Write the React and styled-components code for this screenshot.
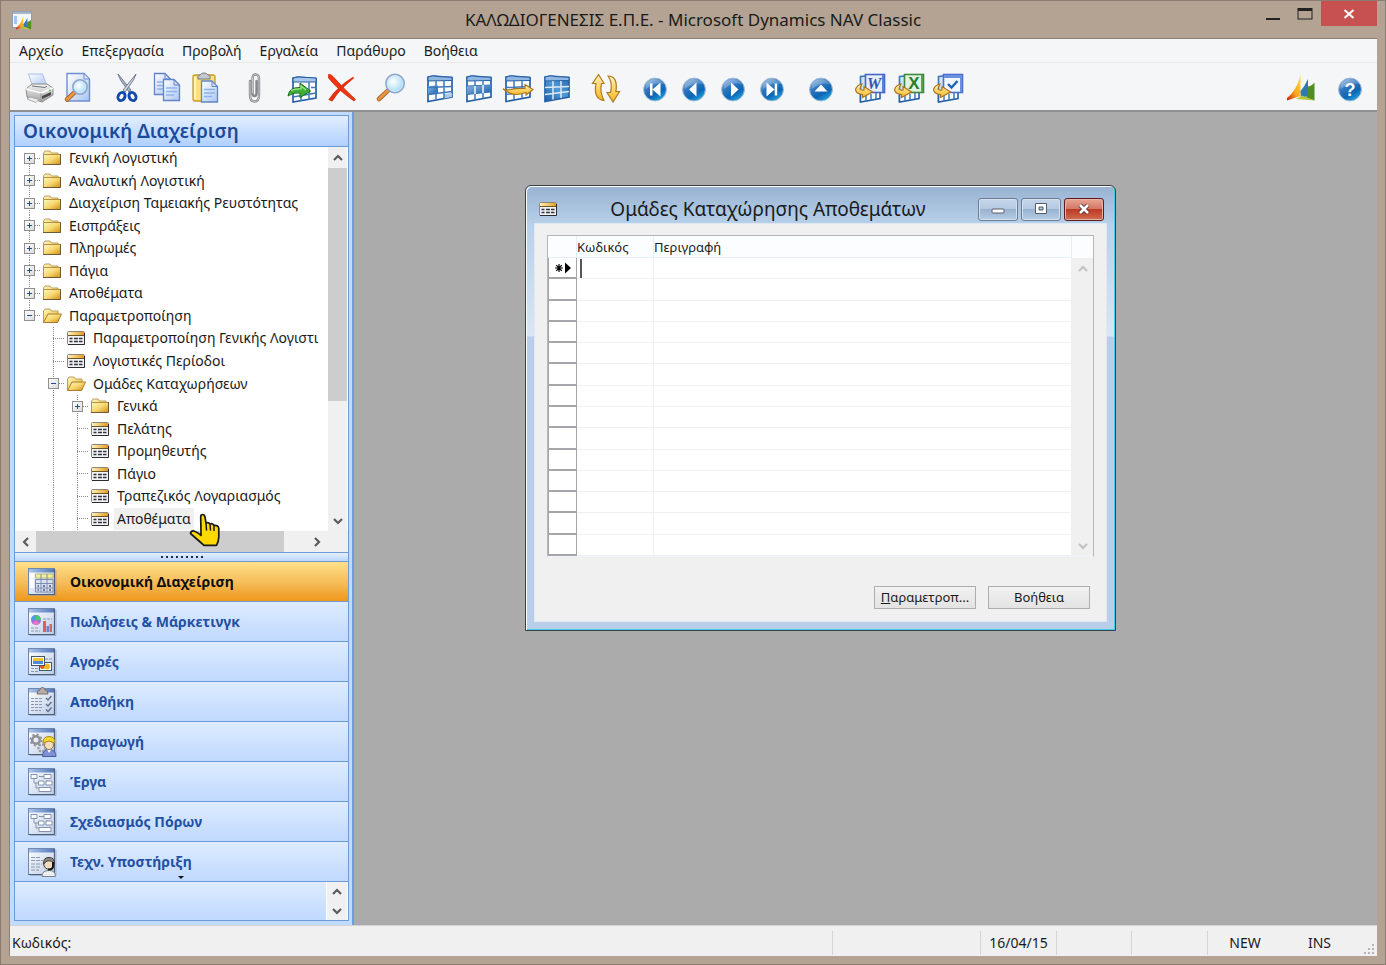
import React, { useState } from 'react';
import styled, { createGlobalStyle, css } from 'styled-components';

const GlobalStyle = createGlobalStyle`
  * {
    box-sizing: border-box;
  }
  body {
    margin: 0;
    font-family: 'Noto Sans', 'Open Sans', sans-serif;
    font-size: 14px;
    color: #1a1a1a;
  }
  button, input {
    font: inherit;
    color: inherit;
    border: 0;
    padding: 0;
    margin: 0;
    background: none;
  }
`;

// Main window
const Window = styled.div`
  display: flex;
  flex-direction: column;
  height: 100vh;
  min-height: 760px;
  padding: 0 8px 8px;
  border: 1px solid #8a7c70;
  background: #b4a392;
`;

const TitleBar = styled.header`
  display: grid;
  grid-template-columns: 120px 1fr 120px;
  align-items: center;
  height: 37px;
  flex: none;
`;

const WindowTitle = styled.h1`
  margin: 0;
  font-size: 17px;
  line-height: 24px;
  font-weight: 400;
  text-align: center;
  white-space: nowrap;
`;

const WindowButtons = styled.div`
  display: flex;
  justify-content: flex-end;
  align-self: start;
`;

const WindowButton = styled.button`
  display: grid;
  place-items: center;
  width: ${(props) => (props.$close ? '56px' : '32px')};
  height: 25px;
  background: ${(props) => (props.$close ? '#c75050' : 'none')};
`;

const Client = styled.div`
  display: flex;
  flex-direction: column;
  flex: 1;
  min-height: 0;
  border: solid #8e8074;
  border-width: 1px 0 0 1px;
`;

const MenuBar = styled.nav`
  display: flex;
  gap: 18px;
  height: 24px;
  padding: 0 9px;
  border-bottom: 1px solid #e6e8ea;
  background: #f5f6f8;
`;

const MenuItem = styled.button`
  line-height: 24px;
`;

const ToolBar = styled.div`
  display: flex;
  gap: 10px;
  height: 49px;
  padding: 2px 8px 0 9px;
  border-bottom: 2px solid #8f908f;
  background: #f5f6f8;
`;

const ToolGroup = styled.div`
  display: flex;
  margin-left: ${(props) => (props.$end ? 'auto' : '0')};
`;

const ToolButton = styled.button`
  display: grid;
  place-items: center;
  width: 39px;
`;

const Body = styled.div`
  display: flex;
  flex: 1;
  min-height: 0;
`;

// Navigation pane
const Sidebar = styled.aside`
  display: flex;
  flex: none;
  width: 344px;
  padding: 3px 3px 4px 4px;
  border-right: 2px solid #6c9de0;
  background: #bfdbff;
`;

const Pane = styled.div`
  display: flex;
  flex-direction: column;
  flex: 1;
  min-width: 0;
  border: 1px solid #6f9ad6;
`;

const PaneTitle = styled.h2`
  height: 31px;
  margin: 0;
  padding-left: 8px;
  border-bottom: 1px solid #6f9ad6;
  background: linear-gradient(#e2eeff, #b0d0ff);
  color: #1c4a9a;
  font-size: 19px;
  line-height: 30px;
  font-weight: 600;
`;

const TreePanel = styled.div`
  position: relative;
  display: grid;
  grid-template-columns: 1fr 20px;
  grid-template-rows: 1fr 21px;
  flex: 1;
  min-height: 0;
  background: #fff;
`;

const TreeList = styled.ul`
  display: grid;
  grid-auto-rows: 1fr;
  margin: 0;
  padding: 0 0 1px 2px;
  list-style: none;
  overflow: hidden;
`;

const TreeRow = styled.li`
  display: flex;
  align-items: stretch;
  min-width: 0;
  white-space: nowrap;
`;

const dots = (side) => `repeating-linear-gradient(to ${side}, #8c8c8c 0 1px, transparent 1px 2px)`;

const Guide = styled.span`
  flex: none;
  width: 24px;
  ${(props) => props.$line && css`
    background: ${dots('bottom')} center / 1px 100% no-repeat;
  `}
`;

const lineBox = {
  full: 'center / 1px 100%',
  down: 'center bottom / 1px 50%',
  up: 'center top / 1px 50%',
};

const Joint = styled.span`
  display: grid;
  place-items: center;
  flex: none;
  width: 24px;
  background:
    ${dots('right')} right center / 50% 1px no-repeat,
    ${dots('bottom')} ${(props) => lineBox[props.$line]} no-repeat;
`;

const Toggle = styled.button`
  display: grid;
  place-items: center;
  width: 11px;
  height: 11px;
  border: 1px solid #8f8f8f;
  background: linear-gradient(135deg, #fff, #dcdcdc);
`;

const TreeIcon = styled.span`
  display: grid;
  place-items: center;
  flex: none;
  width: 22px;
`;

const TreeLabel = styled.span`
  align-self: center;
  margin-left: 3px;
  padding: 0 3px;
  background: ${(props) => (props.$selected ? '#f0f0f0' : 'none')};
  line-height: 22px;
`;

const ScrollButton = styled.button`
  display: grid;
  place-items: center;
  flex: none;
  width: 21px;
  height: 21px;
  color: ${(props) => (props.$faint ? '#c2c2c2' : '#5c5c5c')};
`;

const VScroll = styled.div`
  display: flex;
  flex-direction: column;
  margin-right: 1px;
  background: #f0f0f0;

  ${ScrollButton} {
    width: 100%;
  }
`;

const HScroll = styled.div`
  display: flex;
  grid-column: 1 / -1;
  background: #f0f0f0;
`;

const ScrollCorner = styled.div`
  width: 21px;
`;

const ThumbTrack = styled.div`
  display: flex;
  flex-direction: inherit;
  flex: 1;
`;

const Thumb = styled.div`
  flex: 0 0 ${(props) => props.$size};
  background: #cdcdcd;
`;

const Hand = styled.svg`
  position: absolute;
  left: 174px;
  bottom: 5px;
`;

const Splitter = styled.div`
  display: flex;
  justify-content: center;
  align-items: center;
  gap: 3px;
  height: 10px;
  flex: none;
  border: solid #6f9ad6;
  border-width: 1px 0;
  background: linear-gradient(#e4f0ff, #bcd7fd);
`;

const Dot = styled.i`
  width: 2px;
  height: 2px;
  background: #1f2b48;
`;

const ModuleButton = styled.button`
  position: relative;
  display: flex;
  align-items: center;
  gap: 13px;
  width: 100%;
  height: 40px;
  flex: none;
  padding-left: 12px;
  border-bottom: 1px solid #6f9ad6;
  background: ${(props) => (props.$active
    ? 'linear-gradient(#ffe08a, #f6bb56 55%, #ee971b)'
    : 'linear-gradient(#deebff, #bfd9ff)')};
  color: ${(props) => (props.$active ? '#0f0f0f' : '#2350a2')};
  font-weight: 700;
  text-align: left;
`;

const MoreMark = styled.svg`
  position: absolute;
  left: 162px;
  bottom: 1px;
`;

const PaneFooter = styled.div`
  display: flex;
  justify-content: flex-end;
  height: 38px;
  flex: none;
  background: linear-gradient(#deebff, #bfd9ff);
`;

const FooterScroll = styled.div`
  display: flex;
  flex-direction: column;
  width: 22px;
  border: solid #fff;
  border-width: 0 1px 0 1px;
  background: #f0f0f0;

  ${ScrollButton} {
    width: 100%;
    height: 19px;
  }
`;

// Work area and its form
const Desktop = styled.main`
  position: relative;
  flex: 1;
  background: #ababab;
`;

const Form = styled.section`
  position: absolute;
  left: 171px;
  top: 73px;
  display: flex;
  flex-direction: column;
  width: 591px;
  padding: 1px;
  border: 1px solid #3b3f45;
  border-radius: 6px 6px 0 0;
  background: linear-gradient(#98b3d2, #b9d1ea 40px, #d9e6f4 150px, #b9cfe9 151px);
  box-shadow: inset 1px 1px 0 #fff, inset -1px -1px 0 #3fd0ea;
`;

const FormTitleBar = styled.div`
  display: flex;
  align-items: center;
  height: 36px;
  padding: 8px 10px 0 11px;
`;

const FormTitle = styled.h3`
  flex: 1;
  margin: 0;
  font-size: 19px;
  line-height: 28px;
  font-weight: 400;
  text-align: center;
  white-space: nowrap;
`;

const FormButtons = styled.div`
  display: flex;
  gap: 3px;
`;

const FormButton = styled.button`
  display: grid;
  place-items: center;
  width: 40px;
  height: 23px;
  border: 1px solid ${(props) => (props.$close ? '#5a1a1e' : '#6b7b93')};
  border-radius: 3px;
  background: ${(props) => (props.$close
    ? 'linear-gradient(#e8a593, #d27664 48%, #bb3a22 50%, #cf6c50)'
    : 'linear-gradient(#c5d6ea, #b3c8e0 48%, #98b2d0 50%, #b6cde6)')};
  box-shadow: inset 0 0 0 1px ${(props) => (props.$close ? '#eab3a5' : '#d3e1f1')};
`;

const FormBody = styled.div`
  margin: 0 7px 7px;
  padding: 11px 12px 12px;
  border: 1px solid #dfe8f3;
  background: #f0f0f0;
`;

const Sheet = styled.div`
  display: flex;
  border: 1px solid #b5b6bb;
  border-bottom-color: #eef4fa;
  background: #fff;
`;

const Grid = styled.table`
  flex: 1;
  height: 320px;
  border-collapse: separate;
  border-spacing: 0;
  table-layout: fixed;
`;

const HeadCell = styled.th`
  width: ${(props) => props.$width || 'auto'};
  height: 22px;
  padding: 0;
  border: solid #e4eefa;
  border-width: 0 1px 1px 0;
  background: #fcfdfe;
  font-size: 13px;
  line-height: 20px;
  font-weight: 400;
  text-align: left;
`;

const Cell = styled.td`
  height: 21px;
  padding: 0;
  border: solid #efefef;
  border-width: 0 1px 1px 0;
`;

const MarkCell = styled.td`
  height: 21px;
  padding: 0;
  border: solid #a5a5ab;
  border-width: 0 1px 2px 1px;
`;

const RowMark = styled.svg`
  display: block;
  margin: 0 auto;
`;

const Editor = styled.span`
  display: flex;
  height: 19px;
  margin-left: 3px;
  border-left: 2px solid #555;
`;

const CellInput = styled.input`
  width: 66px;
  height: 19px;
  outline: none;
`;

const SheetScroll = styled.div`
  display: flex;
  flex-direction: column;
  justify-content: space-between;
  width: 21px;
  padding-top: 22px;
  background: linear-gradient(#fcfdfe 22px, #f0f0f0 22px);
`;

const FormActions = styled.div`
  display: flex;
  justify-content: flex-end;
  gap: 12px;
  margin-top: 29px;
  padding-right: 4px;
`;

const FormAction = styled.button`
  width: 102px;
  height: 23px;
  border: 1px solid #adadad;
  background: linear-gradient(#f1f1f1, #e3e3e3);
  font-size: 13px;
  line-height: 21px;
`;

const StatusBar = styled.footer`
  display: flex;
  align-items: stretch;
  height: 31px;
  flex: none;
  padding: 5px 0 1px 2px;
  border-top: 1px solid #d4d4d4;
  background: #f0f0f0;
  line-height: 24px;
`;

const StatusCell = styled.div`
  flex: ${(props) => (props.$width ? `0 0 ${props.$width}` : '1')};
  border-left: ${(props) => (props.$rule ? '1px solid #d5d5d5' : '0')};
  text-align: ${(props) => (props.$width ? 'center' : 'left')};
`;

const Grip = styled.svg`
  flex: none;
  align-self: flex-end;
`;

const DefsHolder = styled.svg`
  position: absolute;
`;

// Shared gradients for all drawings
const Defs = () => (
  <DefsHolder width="0" height="0" aria-hidden="true">
    <defs>
      <linearGradient id="ball" x1="0" y1="0" x2="0.6" y2="1">
        <stop offset="0" stopColor="#a9c7e8" />
        <stop offset="0.45" stopColor="#2f76bd" />
        <stop offset="0.75" stopColor="#0d65b4" />
        <stop offset="1" stopColor="#1d9ad8" />
      </linearGradient>
      <linearGradient id="gold" x1="0" y1="0" x2="1" y2="1">
        <stop offset="0" stopColor="#fff6c4" />
        <stop offset="0.5" stopColor="#f8d870" />
        <stop offset="1" stopColor="#d08e14" />
      </linearGradient>
      <linearGradient id="arrow" x1="0" y1="0" x2="0" y2="1">
        <stop offset="0" stopColor="#fff2c0" />
        <stop offset="1" stopColor="#f5b81d" />
      </linearGradient>
      <linearGradient id="sheet" x1="0" y1="0" x2="1" y2="1">
        <stop offset="0" stopColor="#ffffff" />
        <stop offset="1" stopColor="#a9c4f2" />
      </linearGradient>
      <linearGradient id="steel" x1="0" y1="0" x2="0" y2="1">
        <stop offset="0" stopColor="#f4f4f4" />
        <stop offset="1" stopColor="#a2a2a2" />
      </linearGradient>
      <linearGradient id="cells" x1="0" y1="0" x2="1" y2="1">
        <stop offset="0" stopColor="#8db9e6" />
        <stop offset="1" stopColor="#145ca8" />
      </linearGradient>
      <linearGradient id="deep" x1="0" y1="1" x2="1" y2="0">
        <stop offset="0" stopColor="#1a5ea8" />
        <stop offset="0.5" stopColor="#4f9ad8" />
        <stop offset="1" stopColor="#2468b0" />
      </linearGradient>
      <linearGradient id="cardTop" x1="0" y1="0" x2="1" y2="0">
        <stop offset="0" stopColor="#fff0bc" />
        <stop offset="1" stopColor="#e39d1c" />
      </linearGradient>
      <linearGradient id="bar" x1="0" y1="0" x2="1" y2="0">
        <stop offset="0" stopColor="#a9c3ea" />
        <stop offset="1" stopColor="#5579b8" />
      </linearGradient>
      <linearGradient id="page" x1="0" y1="0" x2="1" y2="1">
        <stop offset="0" stopColor="#ffffff" />
        <stop offset="1" stopColor="#bccbe6" />
      </linearGradient>
      <linearGradient id="sail" x1="1" y1="0" x2="0" y2="1">
        <stop offset="0" stopColor="#ffe23c" />
        <stop offset="0.55" stopColor="#f9a51a" />
        <stop offset="1" stopColor="#c81e10" />
      </linearGradient>
      <radialGradient id="lens" cx="0.4" cy="0.4" r="0.6">
        <stop offset="0" stopColor="#ffffff" />
        <stop offset="1" stopColor="#a6dcf6" />
      </radialGradient>
    </defs>
  </DefsHolder>
);

const Icon = ({ children }) => (
  <svg width="32" height="32" viewBox="0 0 32 32" fill="none" aria-hidden="true">{children}</svg>
);

const Lens = ({ x, y, r, hx, hy }) => (
  <>
    <path d={`M${x - r * 0.7} ${y + r * 0.7}L${hx} ${hy}`} stroke="#a8622a" strokeWidth="4.6" strokeLinecap="round" />
    <path d={`M${x - r * 0.7} ${y + r * 0.7}L${hx} ${hy}`} stroke="#e9983f" strokeWidth="2.8" strokeLinecap="round" />
    <circle cx={x} cy={y} r={r} fill="url(#lens)" stroke="#8fa6cc" strokeWidth="2" />
    <circle cx={x} cy={y} r={r - 1} stroke="#dfeefb" strokeWidth="0.8" />
  </>
);

const TableBase = ({ children, fill = '#fff' }) => (
  <>
    <path d="M4 5L9 4.2L28 5.5V25L4 29.5Z" fill={fill} stroke="#2560a6" strokeWidth="1.7" />
    <path d="M4 5L9 3.8L15 4.6L28 5.3V8.500L4 9Z" fill="#8fb7e2" stroke="#2560a6" />
    {children}
  </>
);

const TableLines = ({ color = '#3d79bb' }) => (
  <path d="M4 15.5L28 14.5M4 22.5L28 19.500M12 9V27.5M20 9V26" stroke={color} strokeWidth="1.500" />
);

const Ball = ({ children }) => (
  <Icon>
    <circle cx="16" cy="17.5" r="11.4" fill="url(#ball)" stroke="#9fb8d4" strokeWidth="1" />
    <path d="M7 12A11 11 0 0 1 25 12Q16 10 7 17Z" fill="#fff" opacity="0.22" />
    {children}
  </Icon>
);

const ExportIcon = ({ color, frame, children }) => (
  <Icon>
    <path d="M6.500 4.5L12 4V28L6.500 29Z" fill="#cfe2f6" stroke="#3a78bb" strokeWidth="1.6" />
    <path d="M6.500 20L26 17V26.500L6.500 30Z" fill="#fff" stroke="#2560a6" strokeWidth="1.6" />
    <path d="M12 22V29M17 22V28M22 20V27" stroke="#3d79bb" strokeWidth="1.5" />
    <rect x="11.5" y="2.5" width="19" height="18" fill={color} stroke={frame} strokeWidth="1.6" />
    {children}
    <path d="M8 12Q3 13 1.5 17.500Q2 22 8.5 22.5V25.5L18.5 20L10 14.5V18Q7 18.5 6 17Q6.500 14.5 8 12Z" fill="url(#arrow)" stroke="#a8731d" strokeWidth="1.2" />
  </Icon>
);

const PrintIcon = () => (
  <Icon>
    <path d="M5.5 2H19.5L24 14H9.5Z" fill="url(#sheet)" stroke="#a9bfe6" />
    <path d="M3 17L9 12H24L30 16V23L19 30L4 25Z" fill="url(#steel)" stroke="#8b8b8b" />
    <path d="M3 17L18 21L30 16" stroke="#fff" strokeWidth="1.4" />
    <path d="M9 14L22 15.5L24 14" stroke="#777" />
    <path d="M18 21V29" stroke="#9a9a9a" />
    <path d="M19 24L28 20V23L19 27Z" fill="#4a4a4a" />
    <path d="M7 25L16 27.5L13 30.5L4 27Z" fill="#efefef" stroke="#9a9a9a" strokeWidth="0.8" />
    <circle cx="27" cy="18.5" r="0.9" fill="#4cc24c" />
  </Icon>
);

const PreviewIcon = () => (
  <Icon>
    <path d="M5 1.5H22L27.5 7V29H5Z" fill="url(#sheet)" stroke="#6f8fd0" strokeWidth="1.4" />
    <path d="M22 1.5V7H27.5Z" fill="#dfeaff" stroke="#6f8fd0" />
    <Lens x={18} y={15} r={7} hx={5} hy={27.5} />
  </Icon>
);

const CutIcon = () => (
  <Icon>
    <path d="M7 2L9.5 8L18 20L20 18Z" fill="#a7b2c2" stroke="#66758c" strokeWidth="0.9" />
    <path d="M25 2L22.5 8L14 20L12 18Z" fill="#ced6e0" stroke="#66758c" strokeWidth="0.9" />
    <ellipse cx="10.5" cy="24.5" rx="3.3" ry="4.2" transform="rotate(30 10.5 24.5)" stroke="#1148b0" strokeWidth="2.9" />
    <ellipse cx="21.5" cy="24.5" rx="3.3" ry="4.2" transform="rotate(-30 21.5 24.5)" stroke="#1148b0" strokeWidth="2.9" />
  </Icon>
);

const SmallPage = ({ x, y }) => (
  <g transform={`translate(${x} ${y})`}>
    <path d="M0.5 0.5H11L16.5 6V21.5H0.5Z" fill="url(#sheet)" stroke="#6484c8" strokeWidth="1.3" />
    <path d="M11 0.5V6H16.5" stroke="#6484c8" />
    <path d="M3 9H14M3 12.5H14M3 16H11" stroke="#8db4ea" strokeWidth="1.4" />
  </g>
);

const CopyIcon = () => (
  <Icon>
    <SmallPage x={4} y={1} />
    <SmallPage x={13} y={7} />
  </Icon>
);

const PasteIcon = () => (
  <Icon>
    <rect x="4" y="3" width="22" height="26" rx="2" fill="#fbe07c" stroke="#c99a27" strokeWidth="1.3" />
    <path d="M6 5V27" stroke="#fff4be" strokeWidth="2" />
    <path d="M9 7V4Q9 3 11 3Q12 1 15 1Q18 1 19 3Q21 3 21 4V7Z" fill="#c5c9cf" stroke="#74787e" />
    <SmallPage x={12} y={8.5} />
  </Icon>
);

const ClipIcon = () => (
  <Icon>
    <path d="M12 9V23Q12 29.5 16.5 29.5Q21 29.5 21 23V7Q21 2.5 17.7 2.5Q14.5 2.5 14.5 7V21Q14.5 24 16.5 24Q18.5 24 18.5 21V9" stroke="#85898e" strokeWidth="2.4" strokeLinecap="round" />
    <path d="M12 9V23Q12 29.5 16.5 29.5Q21 29.5 21 23V7Q21 2.5 17.7 2.5Q14.5 2.5 14.5 7V21" stroke="#dfe2e5" strokeWidth="0.7" />
  </Icon>
);

const InsertIcon = () => (
  <Icon>
    <path d="M6 6L11 5.2L29 6.5V26L6 30Z" fill="#fff" stroke="#2560a6" strokeWidth="1.7" />
    <path d="M6 6L11 5L29 6V10H6Z" fill="#a7c7ea" stroke="#2560a6" />
    <path d="M6 25L29 21M22 10V28M14 24V29M24 15.5H29" stroke="#3d79bb" strokeWidth="1.5" />
    <path d="M1 24Q2 15 13 15.500V11L23.5 19L13 25.500V21Q6 20 1 24Z" fill="#3fae35" stroke="#1c6c1c" />
    <path d="M4 18.500Q8 16.500 14 17V14L19 18" stroke="#a6e58c" strokeWidth="1.2" />
  </Icon>
);

const DeleteIcon = () => (
  <Icon>
    <path d="M2.5 2.5Q5 2 7 4.5Q18 17 29.5 27.5L28 29Q12 18 2.5 6Z" fill="#ef3411" stroke="#c92406" strokeWidth="0.7" />
    <path d="M27.5 5.5Q12 15 3.5 27.5L6 28.5Q13 17 27.5 5.5Z" fill="#ef3411" stroke="#e23010" strokeWidth="1.6" />
  </Icon>
);

const FindIcon = () => (
  <Icon>
    <Lens x={20} y={11.5} r={9} hx={4} hy={27} />
  </Icon>
);

const RefreshIcon = () => (
  <Icon>
    <path d="M8.5 2.5L14 11.500H11.5Q9.5 20 14 28.5Q3 27 6 11.500H2.500Z" fill="url(#arrow)" stroke="#b07a20" strokeWidth="1.2" />
    <path d="M23 30L17 20.500H20.5Q23 11 18 4Q28 4 26 19.500H29.500Z" fill="url(#arrow)" stroke="#b07a20" strokeWidth="1.2" />
  </Icon>
);

const Sails = () => (
  <>
    <path d="M15.5 3V24L2 28.5V26Q12 18 15.5 3Z" fill="url(#sail)" />
    <path d="M15.5 19Q20 14 23 7V24L16 26Z" fill="#2f79b8" />
    <path d="M23 14.500Q27 14 29.500 10.500V28.500L21 25.500Q23.500 21 23 14.500Z" fill="#4f8e22" />
    <path d="M11 27L17 23.500L29.500 28.500Z" fill="#b7c93a" />
  </>
);

const LogoIcon = () => (
  <Icon><Sails /></Icon>
);

const toolGroups = [
  [
    { label: 'Εκτύπωση', icon: <PrintIcon /> },
    { label: 'Προεπισκόπηση', icon: <PreviewIcon /> },
  ],
  [
    { label: 'Αποκοπή', icon: <CutIcon /> },
    { label: 'Αντιγραφή', icon: <CopyIcon /> },
    { label: 'Επικόλληση', icon: <PasteIcon /> },
  ],
  [{ label: 'Συνημμένο', icon: <ClipIcon /> }],
  [
    { label: 'Εισαγωγή', icon: <InsertIcon /> },
    { label: 'Διαγραφή', icon: <DeleteIcon /> },
  ],
  [{ label: 'Εύρεση', icon: <FindIcon /> }],
  [
    {
      label: 'Φίλτρο πεδίου',
      icon: (
        <Icon>
          <TableBase>
            <path d="M4 14L14 13.5V21.5L4 23Z" fill="url(#cells)" />
            <path d="M20 22L28 21V25L20 26.5Z" fill="#a9c9ea" />
            <TableLines />
          </TableBase>
        </Icon>
      ),
    },
    {
      label: 'Φίλτρο πίνακα',
      icon: (
        <Icon>
          <TableBase>
            <path d="M4 14L28 13V20L4 22.5Z" fill="url(#cells)" />
            <path d="M4 14L28 13M4 22.5L28 20" stroke="#3d79bb" />
            <path d="M12 14V22M20 13V21" stroke="#fff" strokeWidth="1.4" />
            <path d="M12 9V14M20 9V13M12 22V28M20 21V26" stroke="#3d79bb" strokeWidth="1.5" />
          </TableBase>
        </Icon>
      ),
    },
    {
      label: 'Ροή φίλτρου',
      icon: (
        <Icon>
          <TableBase><TableLines /></TableBase>
          <path d="M1 17Q5 18.500 9 17.500Q14 16 23 16.500V12.500L31 17.500L24 23V20.500Q14 24 9 21.500Q5 20 1 17Z" fill="url(#arrow)" stroke="#a8731d" strokeWidth="1.100" />
        </Icon>
      ),
    },
    {
      label: 'Εμφάνιση όλων',
      icon: (
        <Icon>
          <TableBase fill="url(#deep)"><TableLines color="#dbe9f8" /></TableBase>
        </Icon>
      ),
    },
  ],
  [{ label: 'Ανανέωση', icon: <RefreshIcon /> }],
  [
    { label: 'Πρώτη', icon: <Ball><path d="M11 11.5H13.5V23.5H11ZM21.5 10.5V24.5L13.5 17.5Z" fill="#fff" /></Ball> },
    { label: 'Προηγούμενη', icon: <Ball><path d="M18.5 10.5V24.5L11 17.5Z" fill="#fff" /></Ball> },
    { label: 'Επόμενη', icon: <Ball><path d="M14 10.5V24.5L21.5 17.5Z" fill="#fff" /></Ball> },
    { label: 'Τελευταία', icon: <Ball><path d="M18.7 11.5H21.2V23.5H18.7ZM10.5 10.5V24.5L18.5 17.5Z" fill="#fff" /></Ball> },
  ],
  [{ label: 'Λίστα', icon: <Ball><path d="M9.5 19.5H22.5L16 12.5Z" fill="#fff" /></Ball> }],
  [
    {
      label: 'Word',
      icon: (
        <ExportIcon color="#e6eefc" frame="#4367c4">
          <path d="M28 3H30V20H28Z" fill="#5d80d8" />
          <text x="20" y="17" textAnchor="middle" fontFamily="Liberation Serif" fontSize="16" fontWeight="700" fontStyle="italic" fill="#3453b0">W</text>
        </ExportIcon>
      ),
    },
    {
      label: 'Excel',
      icon: (
        <ExportIcon color="#e3f2e0" frame="#3d8a3f">
          <path d="M28 3H30V20H28Z" fill="#56a352" />
          <text x="21" y="17" textAnchor="middle" fontFamily="Liberation Sans" fontSize="17" fontWeight="700" fill="#23802c">X</text>
        </ExportIcon>
      ),
    },
    {
      label: 'Εργασίες',
      icon: (
        <ExportIcon color="#f2f6ff" frame="#4a72cc">
          <path d="M12 3H30V6H12ZM28 3H30V20H28Z" fill="#6a90e4" />
          <path d="M16 12L19.5 15.5L25.5 9" stroke="#1f62b8" strokeWidth="2.4" />
        </ExportIcon>
      ),
    },
  ],
];

const FolderIcon = ({ open }) => (
  <svg width="20" height="16" viewBox="0 0 20 16" aria-hidden="true">
    <path d="M1.5 14V3L3 1H8L9.5 3H16V14Z" fill="url(#gold)" stroke="#b8a066" />
    {open
      ? <path d="M1.5 14.5L6 6H19.5L15.5 14.5Z" fill="url(#gold)" stroke="#a87c28" />
      : (
        <>
          <path d="M1.5 14.5V4.5H18.5V14.5Z" fill="url(#gold)" stroke="#b8923e" />
          <path d="M1 14.5H18.500V4" fill="none" stroke="#6e5a34" />
        </>
      )}
  </svg>
);

const CardIcon = () => (
  <svg width="20" height="16" viewBox="0 0 20 16" aria-hidden="true">
    <rect x="1.5" y="1.5" width="17" height="13" rx="1" fill="#f2f3f7" stroke="#8b8676" />
    <path d="M2 2H18V5.5H2Z" fill="url(#cardTop)" />
    <path d="M2 5.5H18" stroke="#6b5523" />
    <path d="M3.5 8.5H6.5M8 8.5H12M13 8.5H16.5M3.5 11.5H6.5M8 11.5H12M13 11.5H16.5" stroke="#33333a" strokeWidth="1.5" />
    <path d="M2 14.5H18.5V3" stroke="#2c2c30" fill="none" />
  </svg>
);

const Chevron = ({ turn = 0 }) => (
  <svg width="12" height="12" viewBox="0 0 12 12" aria-hidden="true">
    <path d="M2 8L6 4L10 8" transform={`rotate(${turn} 6 6)`} fill="none" stroke="currentColor" strokeWidth="2.2" />
  </svg>
);

const treeRows = [
  { text: 'Γενική Λογιστική', depth: 0, kind: 'folder', line: 'down' },
  { text: 'Αναλυτική Λογιστική', depth: 0, kind: 'folder' },
  { text: 'Διαχείριση Ταμειακής Ρευστότητας', depth: 0, kind: 'folder' },
  { text: 'Εισπράξεις', depth: 0, kind: 'folder' },
  { text: 'Πληρωμές', depth: 0, kind: 'folder' },
  { text: 'Πάγια', depth: 0, kind: 'folder' },
  { text: 'Αποθέματα', depth: 0, kind: 'folder' },
  { text: 'Παραμετροποίηση', depth: 0, kind: 'open', line: 'up' },
  { text: 'Παραμετροποίηση Γενικής Λογιστι', depth: 1, kind: 'card' },
  { text: 'Λογιστικές Περίοδοι', depth: 1, kind: 'card' },
  { text: 'Ομάδες Καταχωρήσεων', depth: 1, kind: 'open' },
  { text: 'Γενικά', depth: 2, kind: 'folder' },
  { text: 'Πελάτης', depth: 2, kind: 'card' },
  { text: 'Προμηθευτής', depth: 2, kind: 'card' },
  { text: 'Πάγιο', depth: 2, kind: 'card' },
  { text: 'Τραπεζικός Λογαριασμός', depth: 2, kind: 'card' },
  { text: 'Αποθέματα', depth: 2, kind: 'card', selected: true },
];

const PageFrame = ({ children }) => (
  <svg width="30" height="30" viewBox="0 0 30 30" fill="none" aria-hidden="true">
    <path d="M3 28.5H29V3" stroke="#8a98b4" strokeWidth="1" opacity="0.6" />
    <rect x="1.5" y="1.5" width="26" height="26" fill="url(#page)" stroke="#7088b0" />
    <path d="M2 2H27V5.5H2Z" fill="url(#bar)" />
    <path d="M1.5 27.5H27.5V2" stroke="#4d6078" strokeWidth="1.2" />
    {children}
  </svg>
);

const ChartFlow = () => (
  <>
    <path d="M7 11V16H12M12 9.5H17M20 13V16M9 16V21H13" stroke="#8494ae" />
    <path d="M4 7.5H10V11.5H4ZM17 7.5H24V11.5H17ZM11.5 14H17V18H11.5ZM19 14H25V18H19ZM12 20.5H24V24.5H12Z" fill="#fff" stroke="#8494ae" />
  </>
);

const modules = [
  {
    name: 'Οικονομική Διαχείριση',
    art: (
      <>
        <path d="M3 7H7V11H3ZM3 12H7V21H3Z" fill="#fff" />
        <path d="M8.5 7H26V11H8.5Z" fill="#f2ee9a" stroke="#a9a96a" strokeWidth="0.8" />
        <path d="M8.5 12.5H26V25H8.5ZM8.5 16.5H26M8.5 21H26M14 7V25M20 7V25" fill="#dbe3f2" stroke="#7c8cae" />
        <path d="M10.5 19H12M16 19H18M22 19H24M10.5 23H12M16 23H18M22 23H24" stroke="#42567e" strokeWidth="1.4" />
      </>
    ),
  },
  {
    name: 'Πωλήσεις & Μάρκετινγκ',
    art: (
      <>
        <circle cx="9" cy="13" r="5" fill="#9c6fdb" />
        <path d="M9 13V8A5 5 0 0 1 14 13Z" fill="#47c96d" />
        <path d="M9 13H4A5 5 0 0 1 9 8Z" fill="#4f9de8" />
        <path d="M9 13L5.5 16.5A5 5 0 0 0 12.5 16.5Z" fill="#ea73c6" />
        <path d="M16 12H25M4 21H12M4 24H13" stroke="#8b98b2" strokeDasharray="3 1" />
        <path d="M16 14H19V25H16Z" fill="#e0604a" />
        <path d="M19.5 19H22V25H19.5Z" fill="#6d7fd8" />
        <path d="M22.5 17H25V25H22.5Z" fill="#c86f5e" />
      </>
    ),
  },
  {
    name: 'Αγορές',
    art: (
      <>
        <path d="M18 12H25M4 21.5H12M4 24.5H12" stroke="#8b98b2" strokeDasharray="3 1" />
        <rect x="12.500" y="15.5" width="12" height="8" fill="#fff" stroke="#3f5670" />
        <circle cx="15.5" cy="19.5" r="2.5" fill="#e8542c" />
        <circle cx="20" cy="19.5" r="3" fill="#f4b71e" />
        <rect x="4.5" y="9.5" width="13" height="9" fill="#fff" stroke="#3f5670" />
        <path d="M6 11H16V14H6Z" fill="#f2c033" />
        <path d="M6 14H16V17H6Z" fill="#4c8ad6" />
      </>
    ),
  },
  {
    name: 'Αποθήκη',
    art: (
      <>
        <path d="M10 7Q10 3 13 3Q13 0.5 15.5 0.5Q18 0.5 18 3Q21 3 21 7Z" fill="#b5aca8" stroke="#77706c" />
        <path d="M4 11.5H16M4 14.5H16M4 17.5H16M4 20.5H16M4 23.5H14" stroke="#8b98b2" strokeDasharray="3 1" />
        <path d="M19 11L21 13L24.5 9M19 17L21 19L24.5 15M19 22.5L21 24.5L24.5 20.5" stroke="#5d7090" strokeWidth="1.3" />
      </>
    ),
  },
  {
    name: 'Παραγωγή',
    art: (
      <>
        <circle cx="9" cy="13" r="3.8" stroke="#8d8f94" strokeWidth="2.6" />
        <circle cx="9" cy="13" r="5.6" stroke="#8d8f94" strokeWidth="1.8" strokeDasharray="2 2.4" />
        <circle cx="15" cy="21" r="3.5" stroke="#97999e" strokeWidth="2.4" strokeDasharray="2 1.2" />
        <path d="M15.5 29.5Q15.5 22.5 22 22.5Q29 22.5 29 29.5Z" fill="#7d90d8" stroke="#4b5ca0" />
        <path d="M20 22L22 26L24.5 22Z" fill="#fff" />
        <circle cx="22" cy="18" r="4.5" fill="#f4dcb8" stroke="#93734a" />
        <path d="M16 16Q16 9.5 22 9.5Q28 9.5 28 16L22 14Z" fill="#f8d62c" stroke="#a88a18" />
      </>
    ),
  },
  { name: 'Έργα', art: <ChartFlow /> },
  { name: 'Σχεδιασμός Πόρων', art: <ChartFlow /> },
  {
    name: 'Τεχν. Υποστήριξη',
    art: (
      <>
        <path d="M4 10.5H13M4 13.5H16M4 17H15M4 20H14M4 23H12" stroke="#8b98b2" strokeDasharray="4 1" />
        <path d="M15 29.5Q15 23.5 22 23.5Q28.5 23.5 28.5 29.5Z" fill="#edf0f2" stroke="#7b858c" />
        <circle cx="22" cy="17" r="5.3" fill="#efdcc0" stroke="#3b3936" />
        <path d="M16.5 17Q16.5 10 22 10.5Q28 10.5 27.5 17Q25 13 20 14Z" fill="#8a8680" stroke="#3b3936" />
        <path d="M26 15V20Q25 23 21 22.5" stroke="#161616" strokeWidth="2" />
      </>
    ),
  },
];

const HandCursor = () => (
  <Hand width="32" height="34" viewBox="0 0 32 34" aria-hidden="true">
    <path d="M12 19.5L11.7 4Q11.7 1.5 13.7 1.5Q15.5 1.5 16 4L17 10Q19.5 9 21 11Q23.5 10 25 12.5Q29.5 12 29.8 15.5V24Q29.5 29 27.5 32.3H15Q10 28 1.5 20.5Q2 17.5 5 18Q9 19.5 12 22.5Z" fill="#ffd900" stroke="#1a1a1a" strokeWidth="1.7" strokeLinejoin="round" />
    <path d="M17 10L17.5 17M21 11L21.5 17M25 12.5V17.5" stroke="#1a1a1a" strokeWidth="1.5" strokeLinecap="round" />
  </Hand>
);

function Tree() {
  return (
    <TreePanel>
      <TreeList>
        {treeRows.map((row, index) => (
          <TreeRow key={index}>
            {row.depth > 0 && <Guide />}
            {row.depth > 1 && <Guide $line />}
            <Joint $line={row.line || 'full'}>
              {row.kind !== 'card' && (
                <Toggle aria-label={row.text}>
                  <svg width="9" height="9" viewBox="0 0 9 9">
                    <path d={row.kind === 'open' ? 'M2 4.5H7' : 'M2 4.5H7M4.5 2V7'} stroke="#2b4a9c" />
                  </svg>
                </Toggle>
              )}
            </Joint>
            <TreeIcon>
              {row.kind === 'card' ? <CardIcon /> : <FolderIcon open={row.kind === 'open'} />}
            </TreeIcon>
            <TreeLabel $selected={row.selected}>{row.text}</TreeLabel>
          </TreeRow>
        ))}
      </TreeList>
      <VScroll>
        <ScrollButton aria-label="Πάνω"><Chevron /></ScrollButton>
        <ThumbTrack><Thumb $size="68%" /></ThumbTrack>
        <ScrollButton aria-label="Κάτω"><Chevron turn={180} /></ScrollButton>
      </VScroll>
      <HScroll>
        <ScrollButton aria-label="Αριστερά"><Chevron turn={-90} /></ScrollButton>
        <ThumbTrack><Thumb $size="92%" /></ThumbTrack>
        <ScrollButton aria-label="Δεξιά"><Chevron turn={90} /></ScrollButton>
        <ScrollCorner />
      </HScroll>
      <HandCursor />
    </TreePanel>
  );
}

function NavigationPane() {
  const [active, setActive] = useState(0);

  return (
    <Sidebar>
      <Pane>
        <PaneTitle>{modules[active].name}</PaneTitle>
        <Tree />
        <Splitter>
          {Array.from({ length: 9 }, (_, i) => <Dot key={i} />)}
        </Splitter>
        {modules.map((module, index) => (
          <ModuleButton key={module.name} $active={index === active} onClick={() => setActive(index)}>
            <PageFrame>{module.art}</PageFrame>
            {module.name}
            {index === modules.length - 1 && (
              <MoreMark width="8" height="5" viewBox="0 0 8 5"><path d="M1 1H7L4 4Z" fill="#111" /></MoreMark>
            )}
          </ModuleButton>
        ))}
        <PaneFooter>
          <FooterScroll>
            <ScrollButton aria-label="Προηγούμενα"><Chevron /></ScrollButton>
            <ScrollButton aria-label="Επόμενα"><Chevron turn={180} /></ScrollButton>
          </FooterScroll>
        </PaneFooter>
      </Pane>
    </Sidebar>
  );
}

function PostingGroupsForm() {
  const [code, setCode] = useState('');

  return (
    <Form>
      <FormTitleBar>
        <CardIcon />
        <FormTitle>Ομάδες Καταχώρησης Αποθεμάτων</FormTitle>
        <FormButtons>
          <FormButton aria-label="Ελαχιστοποίηση">
            <svg width="16" height="12" viewBox="0 0 16 12"><rect x="2" y="6" width="12" height="4" rx="1" fill="#fff" stroke="#545d6b" /></svg>
          </FormButton>
          <FormButton aria-label="Μεγιστοποίηση">
            <svg width="14" height="12" viewBox="0 0 14 12"><path d="M1.5 0.5H12.5V10.5H1.5ZM5 4V7H9V4Z" fill="#fff" fillRule="evenodd" stroke="#545d6b" /></svg>
          </FormButton>
          <FormButton $close aria-label="Κλείσιμο">
            <svg width="14" height="12" viewBox="0 0 14 12">
              <path d="M3 2L11 10M11 2L3 10" stroke="#5b2d2d" strokeWidth="4.5" />
              <path d="M3 2L11 10M11 2L3 10" stroke="#fff" strokeWidth="2.6" />
            </svg>
          </FormButton>
        </FormButtons>
      </FormTitleBar>
      <FormBody>
        <Sheet>
          <Grid>
            <thead>
              <tr>
                <HeadCell $width="29px" aria-label="Επιλογή" />
                <HeadCell $width="77px">Κωδικός</HeadCell>
                <HeadCell>Περιγραφή</HeadCell>
              </tr>
            </thead>
            <tbody>
              {Array.from({ length: 14 }, (_, i) => (
                <tr key={i}>
                  <MarkCell>
                    {i === 0 && (
                      <RowMark width="18" height="12" viewBox="0 0 18 12">
                        <path d="M5 2V10M1 6H9M2.2 3.2L7.8 8.8M7.8 3.2L2.2 8.8" stroke="#000" strokeWidth="1.2" />
                        <path d="M11 0.5L17 6L11 11.5Z" fill="#000" />
                      </RowMark>
                    )}
                  </MarkCell>
                  <Cell>
                    {i === 0 && (
                      <Editor>
                        <CellInput aria-label="Κωδικός" value={code} onChange={(e) => setCode(e.target.value)} />
                      </Editor>
                    )}
                  </Cell>
                  <Cell />
                </tr>
              ))}
            </tbody>
          </Grid>
          <SheetScroll>
            <ScrollButton $faint aria-label="Πάνω"><Chevron /></ScrollButton>
            <ScrollButton $faint aria-label="Κάτω"><Chevron turn={180} /></ScrollButton>
          </SheetScroll>
        </Sheet>
        <FormActions>
          <FormAction><u>Π</u>αραμετροπ...</FormAction>
          <FormAction>Βοήθεια</FormAction>
        </FormActions>
      </FormBody>
    </Form>
  );
}

const menus = ['Αρχείο', 'Επεξεργασία', 'Προβολή', 'Εργαλεία', 'Παράθυρο', 'Βοήθεια'];

function App() {
  return (
    <Window>
      <GlobalStyle />
      <Defs />
      <TitleBar>
        <svg width="26" height="24" viewBox="0 0 26 24" fill="none" aria-hidden="true">
          <rect x="3.5" y="3.5" width="19" height="16" fill="#f4f7fa" stroke="#8fa0b4" />
          <path d="M4 4H22V6H4Z" fill="#a9b6c6" />
          <path d="M5 8H8V16H5Z" fill="#a8c4e6" />
          <g transform="translate(6 6) scale(0.54)"><Sails /></g>
        </svg>
        <WindowTitle>ΚΑΛΩΔΙΟΓΕΝΕΣΙΣ Ε.Π.Ε. - Microsoft Dynamics NAV Classic</WindowTitle>
        <WindowButtons>
          <WindowButton aria-label="Ελαχιστοποίηση">
            <svg width="16" height="14" viewBox="0 0 16 14"><path d="M1 11H15V13H1Z" fill="#222" /></svg>
          </WindowButton>
          <WindowButton aria-label="Μεγιστοποίηση">
            <svg width="16" height="14" viewBox="0 0 16 14"><path d="M0.5 1H15.5V12.5H0.5ZM1.5 4V11.5H14.5V4Z" fill="#222" fillRule="evenodd" /></svg>
          </WindowButton>
          <WindowButton $close aria-label="Κλείσιμο">
            <svg width="12" height="10" viewBox="0 0 12 10"><path d="M1.5 1L10.5 9M10.5 1L1.5 9" stroke="#fff" strokeWidth="2" /></svg>
          </WindowButton>
        </WindowButtons>
      </TitleBar>
      <Client>
        <MenuBar>
          {menus.map((menu) => <MenuItem key={menu}>{menu}</MenuItem>)}
        </MenuBar>
        <ToolBar>
          {toolGroups.map((group, index) => (
            <ToolGroup key={index}>
              {group.map((tool) => (
                <ToolButton key={tool.label} aria-label={tool.label}>{tool.icon}</ToolButton>
              ))}
            </ToolGroup>
          ))}
          <ToolGroup $end>
            <ToolButton aria-label="Microsoft Dynamics"><LogoIcon /></ToolButton>
          </ToolGroup>
          <ToolGroup>
            <ToolButton aria-label="Βοήθεια">
              <Ball>
                <text x="16" y="24" textAnchor="middle" fontFamily="Liberation Sans" fontSize="18" fontWeight="700" fill="#fff">?</text>
              </Ball>
            </ToolButton>
          </ToolGroup>
        </ToolBar>
        <Body>
          <NavigationPane />
          <Desktop>
            <PostingGroupsForm />
          </Desktop>
        </Body>
        <StatusBar>
          <StatusCell>Κωδικός:</StatusCell>
          <StatusCell $rule $width="148px" />
          <StatusCell $rule $width="76px">16/04/15</StatusCell>
          <StatusCell $rule $width="75px" />
          <StatusCell $rule $width="76px" />
          <StatusCell $rule $width="75px">NEW</StatusCell>
          <StatusCell $width="75px">INS</StatusCell>
          <Grip width="20" height="14" viewBox="0 0 20 14" aria-hidden="true">
            <path d="M15 3H17V5H15ZM11 7H13V9H11ZM15 7H17V9H15ZM7 11H9V13H7ZM11 11H13V13H11ZM15 11H17V13H15Z" fill="#b5b5b5" />
          </Grip>
        </StatusBar>
      </Client>
    </Window>
  );
}

export default App;
